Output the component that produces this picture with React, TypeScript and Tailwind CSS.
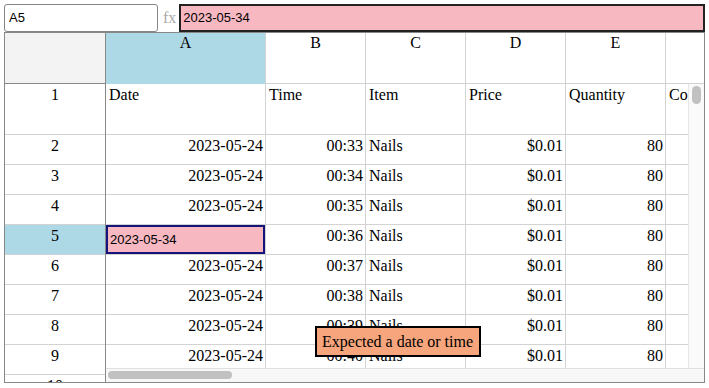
import React from "react";

const serif = "font-['Liberation_Serif',serif]";
const sans = "font-['Liberation_Sans',Arial,sans-serif]";

const cols = [
  { key: "A", w: "w-[160px]" },
  { key: "B", w: "w-[100px]" },
  { key: "C", w: "w-[100px]" },
  { key: "D", w: "w-[100px]" },
  { key: "E", w: "w-[100px]" },
  { key: "F", w: "w-[100px]" },
];

const header = ["Date", "Time", "Item", "Price", "Quantity", "Co"];

const rows = [2, 3, 4, 5, 6, 7, 8, 9, 10].map((n) => ({
  n,
  date: "2023-05-24",
  time: `00:${String(31 + n).padStart(2, "0")}`,
  item: "Nails",
  price: "$0.01",
  qty: "80",
}));

export default function App() {
  return (
    <div className={`w-[709px] h-[388px] bg-white pt-1 pl-1 text-black ${serif}`}>
      {/* formula bar */}
      <div className="flex items-center h-[28px] w-[701px]">
        <div className={`w-[154px] h-[28px] border border-[#858585] rounded-[3px] flex items-center px-[4px] text-[13px] ${sans}`}>
          A5
        </div>
        <span className="ml-[5px] mr-[3px] text-[16px] text-[#aaaaaa]">fx</span>
        <div className={`flex-1 h-[28px] border-2 border-[#222] bg-[#f7b8c2] flex items-center px-[2px] text-[13px] ${sans}`}>
          2023-05-34
        </div>
      </div>

      {/* sheet */}
      <div className="w-[701px] h-[351px] border border-[#888] overflow-hidden text-[16px] leading-[18px]">
        {/* column headers */}
        <div className="flex h-[51px]">
          <div className="w-[101px] shrink-0 bg-[#f3f3f3] border-r border-b border-[#888]" />
          {cols.map((c) => (
            <div
              key={c.key}
              className={`${c.w} shrink-0 text-center pt-[1px] border-r border-b border-[#d3d3d3] ${c.key === "A" ? "bg-[#add8e6] border-b-[#add8e6]" : "bg-white"}`}
            >
              {c.key === "F" ? "" : c.key}
            </div>
          ))}
        </div>

        {/* body */}
        <div className="flex h-[298px]">
          <div className="w-[101px] shrink-0 border-r border-[#888] overflow-hidden">
            <div className="h-[51px] border-b border-[#d3d3d3] text-center pt-[2px]">1</div>
            {rows.map((r) => (
              <div
                key={r.n}
                className={`h-[30px] border-b border-[#d3d3d3] text-center pt-[2px] ${r.n === 5 ? "bg-[#add8e6]" : ""}`}
              >
                {r.n}
              </div>
            ))}
          </div>

          <div className="relative flex-1 overflow-hidden">
            <div className="flex h-[51px]">
              {cols.map((c, i) => (
                <div key={c.key} className={`${c.w} shrink-0 border-r border-b border-[#d3d3d3] px-[3px] pt-[2px] whitespace-nowrap overflow-hidden`}>
                  {header[i]}
                </div>
              ))}
            </div>
            {rows.map((r) => (
              <div key={r.n} className="flex h-[30px]">
                {r.n === 5 ? (
                  <div className="w-[160px] shrink-0 border-r border-b border-[#d3d3d3] p-0">
                    <div className={`h-[29px] w-[159px] border-2 border-[#14147a] bg-[#f7b8c2] text-[13px] ${sans} flex items-end pb-[3px] px-[2px]`}>
                      2023-05-34
                    </div>
                  </div>
                ) : (
                  <div className="w-[160px] shrink-0 border-r border-b border-[#d3d3d3] px-[2px] pt-[2px] text-right">{r.date}</div>
                )}
                <div className="w-[100px] shrink-0 border-r border-b border-[#d3d3d3] px-[2px] pt-[2px] text-right">{r.time}</div>
                <div className="w-[100px] shrink-0 border-r border-b border-[#d3d3d3] px-[3px] pt-[2px]">{r.item}</div>
                <div className="w-[100px] shrink-0 border-r border-b border-[#d3d3d3] px-[2px] pt-[2px] text-right">{r.price}</div>
                <div className="w-[100px] shrink-0 border-r border-b border-[#d3d3d3] px-[2px] pt-[2px] text-right">{r.qty}</div>
                <div className="w-[100px] shrink-0 border-r border-b border-[#d3d3d3]" />
              </div>
            ))}

            {/* scrollbars */}
            <div className="absolute top-0 right-0 bottom-[14px] w-[16px] bg-[#fafafa] border-l border-[#e6e6e6]">
              <div className="mt-[2px] ml-[3px] w-[9px] h-[18px] rounded-full bg-[#c1c1c1]" />
            </div>
            <div className="absolute left-0 right-0 bottom-0 h-[14px] bg-[#f7f7f7] border-t border-[#e0e0e0]">
              <div className="mt-[2px] ml-[2px] w-[124px] h-[8px] rounded-full bg-[#c1c1c1]" />
            </div>
          </div>
        </div>
      </div>

      {/* validation tooltip */}
      <div className="absolute left-[315px] top-[326px] w-[166px] h-[31px] border-2 border-black bg-[#f6a57c] px-[5px] pt-[5px] text-[16px] leading-[18px] whitespace-nowrap">
        Expected a date or time
      </div>
    </div>
  );
}
